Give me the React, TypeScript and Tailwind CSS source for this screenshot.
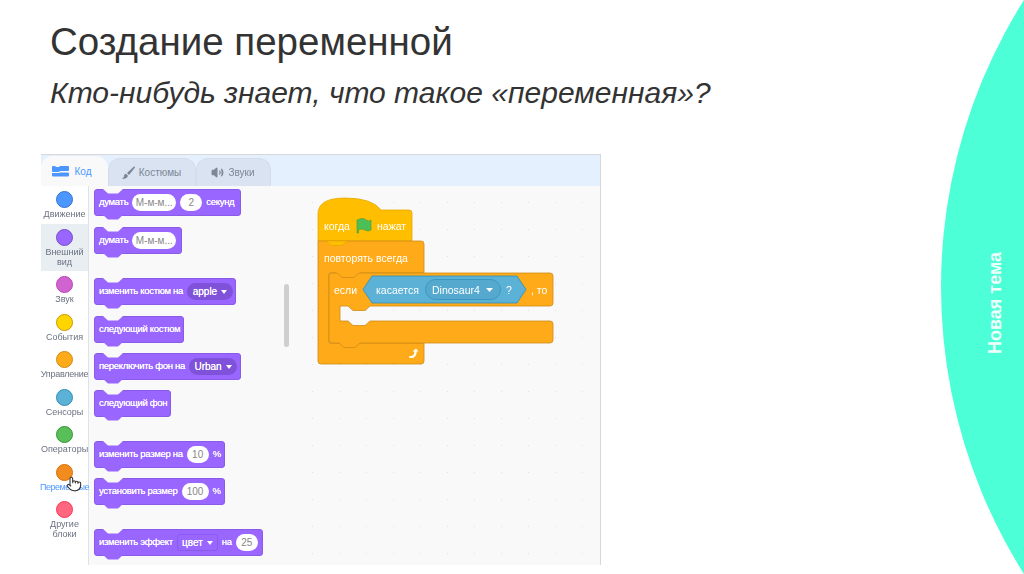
import type { ReactNode } from "react";
import { Pointer, Volume2 } from "lucide-react";

// ── Palette data ──────────────────────────────────────────────────────────────

const categories = [
  { label: ["Движение"], color: "bg-[#4c97ff] border-[#3373cc]", box: "h-[38px]", text: "text-[#6b7280]" },
  { label: ["Внешний", "вид"], color: "bg-[#9966ff] border-[#774dcb]", box: "h-[47px] bg-[#e9eef2]", text: "text-[#6b7280]" },
  { label: ["Звук"], color: "bg-[#cf63cf] border-[#bd42bd]", box: "h-[37.5px]", text: "text-[#6b7280]" },
  { label: ["События"], color: "bg-[#ffd500] border-[#cc9900]", box: "h-[37.5px]", text: "text-[#6b7280]" },
  { label: ["Управление"], color: "bg-[#ffab19] border-[#cf8b17]", box: "h-[37.5px]", text: "text-[#6b7280] tracking-[-0.25px]" },
  { label: ["Сенсоры"], color: "bg-[#5cb1d6] border-[#2e8eb8]", box: "h-[37.5px]", text: "text-[#6b7280]" },
  { label: ["Операторы"], color: "bg-[#59c059] border-[#389438]", box: "h-[37.5px]", text: "text-[#6b7280]" },
  { label: ["Переменные"], color: "bg-[#f28c1e] border-[#db6e00]", box: "h-[37.5px]", text: "text-[#4c97ff] tracking-[-0.5px]" },
  { label: ["Другие", "блоки"], color: "bg-[#ff6680] border-[#ff3355]", box: "h-[47px]", text: "text-[#6b7280]" },
];

// ── Small pieces ──────────────────────────────────────────────────────────────

const Block = ({ className, children }: { className: string; children: ReactNode }) => (
  <div
    className={`relative flex h-[27px] items-center gap-[4px] rounded-[3px] border border-[#8a5ae8] bg-[#9966ff] pl-[4px] text-[9.5px] tracking-[-0.3px] whitespace-nowrap text-white [text-shadow:0_0_0.6px_white] ${className}`}
  >
    <svg className="absolute left-[8px] top-[-1px]" width="21" height="5" viewBox="0 0 21 5">
      <path d="M0 0 L5 4.5 H15 L20 0 Z" fill="#f9f9f9" />
    </svg>
    <svg className="absolute left-[8px] top-full" width="21" height="5" viewBox="0 0 21 5">
      <path d="M0 0 L5 4.5 H15 L20 0 Z" fill="#9966ff" />
    </svg>
    {children}
  </div>
);

const Input = ({ className, children }: { className: string; children: ReactNode }) => (
  <span className={`flex h-[17px] shrink-0 items-center justify-center rounded-full bg-white text-[10px] tracking-normal text-[#888] [text-shadow:none] ${className}`}>
    {children}
  </span>
);

const Menu = ({ className, children }: { className: string; children: ReactNode }) => (
  <span className={`flex h-[17px] shrink-0 items-center justify-center gap-[4px] text-[10px] tracking-normal ${className}`}>
    {children}
    <Caret />
  </span>
);

const Caret = () => (
  <svg width="6" height="4" viewBox="0 0 6 4">
    <path d="M0 0 H6 L3 4 Z" fill="white" />
  </svg>
);

const CodeIcon = () => (
  <svg width="17" height="11" viewBox="0 0 17 11">
    <path
      d="M0 1 Q0 0 1 0 H3 L4 1 H7 L8 0 H16 Q17 0 17 1 V4 Q17 5 16 5 H8 L7 6 H1 Q0 6 0 5 Z M0 7 H7 L8 6.5 H16 Q17 6.5 17 7.5 V9.5 Q17 10.5 16 10.5 H1 Q0 10.5 0 9.5 Z"
      fill="#4c97ff"
    />
  </svg>
);

const BrushIcon = () => (
  <svg width="14" height="14" viewBox="0 0 14 14">
    <path d="M13 0.5 L6 7 L8 9 L14 1.5 Q14 0 13 0.5 Z M5 7.8 L7 9.8 Q6 13 1 13 Q3.5 11 3 9.5 Q3.5 8 5 7.8 Z" fill="#7d8694" />
  </svg>
);

// ── Panels ────────────────────────────────────────────────────────────────────

const Tabs = () => (
  <div className="flex h-[31px] items-end bg-[#e5f0ff] text-[10px]">
    <div className="flex h-[30px] w-[67px] items-center justify-center gap-[5px] rounded-t-[12px] bg-[#f9f9f9] pr-[5px] text-[#4c97ff]">
      <CodeIcon />
      Код
    </div>
    <div className="flex h-[28px] w-[88px] items-center justify-center gap-[4px] rounded-t-[12px] border border-b-0 border-[#d5dde8] bg-[#d9e3f2] pr-[2px] text-[#7d8694]">
      <BrushIcon />
      Костюмы
    </div>
    <div className="flex h-[28px] w-[75px] items-center justify-center gap-[4px] rounded-t-[12px] border border-b-0 border-[#d5dde8] bg-[#d9e3f2] pr-[1px] text-[#7d8694]">
      <Volume2 size={13} fill="#7d8694" strokeWidth={2} />
      Звуки
    </div>
  </div>
);

const Sidebar = () => (
  <div className="w-[48px] shrink-0 border-r border-[#dde3ea] bg-white">
    {categories.map((c) => (
      <div key={c.label[0]} className={`flex flex-col items-center pt-[5px] ${c.box}`}>
        <div className={`size-[17px] shrink-0 rounded-full border ${c.color}`} />
        <div className={`mt-[1px] text-center text-[9px] leading-[10px] whitespace-nowrap ${c.text}`}>
          {c.label.map((l) => (
            <div key={l}>{l}</div>
          ))}
        </div>
      </div>
    ))}
  </div>
);

const Palette = () => (
  <div className="relative w-[201px] shrink-0 bg-[#f9f9f9] pl-[5px] pt-[3px]">
    <Block className="w-[147px]">
      думать
      <Input className="w-[44px]">М-м-м...</Input>
      <Input className="w-[22px]">2</Input>
      секунд
    </Block>
    <Block className="mt-[11px] w-[88px]">
      думать
      <Input className="w-[44px]">М-м-м...</Input>
    </Block>
    <Block className="mt-[24px] w-[142px]">
      изменить костюм на
      <Menu className="w-[46px] rounded-full bg-[#7f52d9]">apple</Menu>
    </Block>
    <Block className="mt-[11px] w-[90px]">следующий костюм</Block>
    <Block className="mt-[10px] w-[147px]">
      переключить фон на
      <Menu className="w-[48px] rounded-full bg-[#7f52d9]">Urban</Menu>
    </Block>
    <Block className="mt-[10px] w-[77px]">следующий фон</Block>
    <Block className="mt-[24px] w-[131px]">
      изменить размер на
      <Input className="w-[22px]">10</Input>%
    </Block>
    <Block className="mt-[10px] w-[131px]">
      установить размер
      <Input className="w-[27px]">100</Input>%
    </Block>
    <Block className="mt-[24px] w-[169px]">
      изменить эффект
      <Menu className="w-[41px] rounded-[3px] border border-[#8a5ae8]">цвет</Menu>
      на
      <Input className="w-[22px]">25</Input>
    </Block>
    {/* scrollbar */}
    <div className="absolute left-[195px] top-[98px] h-[63px] w-[5px] rounded-full bg-[#cfcfcf]" />
  </div>
);

const ScriptShapes = () => (
  <svg className="absolute left-0 top-0" width="310" height="379" viewBox="290 186 310 379">
    {/* hat */}
    <path
      d="M318 214 Q318 198 345 198 Q372 198 381 210 H409 Q412 210 412 213 V241 H318 Z"
      fill="#ffbf00"
      stroke="#e6a800"
      strokeWidth="0.8"
    />
    {/* forever */}
    <path
      d="M318 241 H421 Q424 241 424 244 V273 H329 V343 H424 V361 Q424 364 421 364 H321 Q318 364 318 361 Z"
      fill="#ffab19"
      stroke="#cf8b17"
      strokeWidth="0.8"
    />
    <path d="M326 241 L331 245.5 H342 L347 241 Z" fill="#ffbf00" stroke="#e6a800" strokeWidth="0.8" />
    {/* forever's tab that sits in the top notch of the if block */}
    <path d="M336 272 H360 V278 H336 Z" fill="#ffab19" />
    {/* if */}
    <path
      d="M329 276 Q329 273 332 273 H337 L342 277.5 H354 L359 273 H550 Q553 273 553 276 V303 Q553 306 550 306 H370 L365 310.5 H353 L348 306 H340 V321 H348 L353 325.5 H365 L370 321 H550 Q553 321 553 324 V340 Q553 343 550 343 H360 L355 347.5 H344 L339 343 H332 Q329 343 329 340 Z"
      fill="#ffab19"
      stroke="#cf8b17"
      strokeWidth="0.8"
    />
    {/* touching? */}
    <path d="M372 276 H517 L526 289.5 L517 303 H372 L363 289.5 Z" fill="#5cb1d6" stroke="#2e8eb8" strokeWidth="0.8" />
    <rect x="425.5" y="279.5" width="75" height="20" rx="10" fill="#55a9ce" stroke="#2e8eb8" strokeWidth="0.7" />
    <path d="M486 288 H493 L489.5 292 Z" fill="white" />
    {/* flag */}
    <path d="M357 220 Q363 217 366 220 Q369 222 371 220 V230 Q368 232 365 230 Q361 228 358.5 230 V233 H357 Z" fill="#4cbf56" stroke="#45993d" strokeWidth="0.6" />
    {/* loop arrow */}
    <path d="M409 356 Q414 357 414.5 351.5 L412.5 351.5 L416 348.5 L418.5 351.5 L416.8 351.5 Q416.5 359 409.5 358 Z" fill="white" />
  </svg>
);

const ScriptLabel = ({ className, children }: { className: string; children: ReactNode }) => (
  <span className={`absolute -translate-y-1/2 text-[10.5px] leading-none whitespace-nowrap text-white ${className}`}>
    {children}
  </span>
);

const ScriptArea = () => (
  <div className="relative flex-1 bg-[#f9f9f9] bg-[radial-gradient(#e2e2e2_0.6px,transparent_0.8px)] bg-[size:27px_27px] bg-[position:9px_3px]">
    <ScriptShapes />
    <ScriptLabel className="left-[34px] top-[40px]">когда</ScriptLabel>
    <ScriptLabel className="left-[87px] top-[40px]">нажат</ScriptLabel>
    <ScriptLabel className="left-[34px] top-[72px]">повторять всегда</ScriptLabel>
    <ScriptLabel className="left-[44px] top-[104px]">если</ScriptLabel>
    <ScriptLabel className="left-[86px] top-[104px]">касается</ScriptLabel>
    <ScriptLabel className="left-[142px] top-[104px]">Dinosaur4</ScriptLabel>
    <ScriptLabel className="left-[216px] top-[104px]">?</ScriptLabel>
    <ScriptLabel className="left-[241px] top-[104px]">, то</ScriptLabel>
  </div>
);

// ── App ───────────────────────────────────────────────────────────────────────

export default function App() {
  return (
    <div className="relative h-[574px] w-[1024px] overflow-hidden bg-white font-['Liberation_Sans',Arial,sans-serif]">
      {/* decorative circle */}
      <div className="absolute left-[941px] top-[-251px] size-[1076px] rounded-full bg-[#4dffd6]" />
      <div className="absolute left-[984px] top-[252px] text-[18px] leading-[22px] font-bold whitespace-nowrap text-white/90 [writing-mode:vertical-rl] rotate-180">
        Новая тема
      </div>

      <div className="pl-[50px] pt-[19px] text-[#333]">
        <h1 className="text-[38.5px] leading-[46px]">Создание переменной</h1>
        <p className="mt-[10px] text-[30px] leading-[36px] italic">Кто-нибудь знает, что такое «переменная»?</p>
      </div>

      <div className="ml-[41px] mt-[43px] flex h-[411px] w-[560px] flex-col border-t border-r border-[#d8d8d8] blur-[0.3px]">
        <Tabs />
        <div className="flex min-h-0 flex-1">
          <Sidebar />
          <Palette />
          <ScriptArea />
        </div>
      </div>

      {/* mouse cursor over the Variables category */}
      <Pointer className="absolute left-[66px] top-[476px]" size={16} fill="white" color="#333" strokeWidth={1.6} />
    </div>
  );
}
